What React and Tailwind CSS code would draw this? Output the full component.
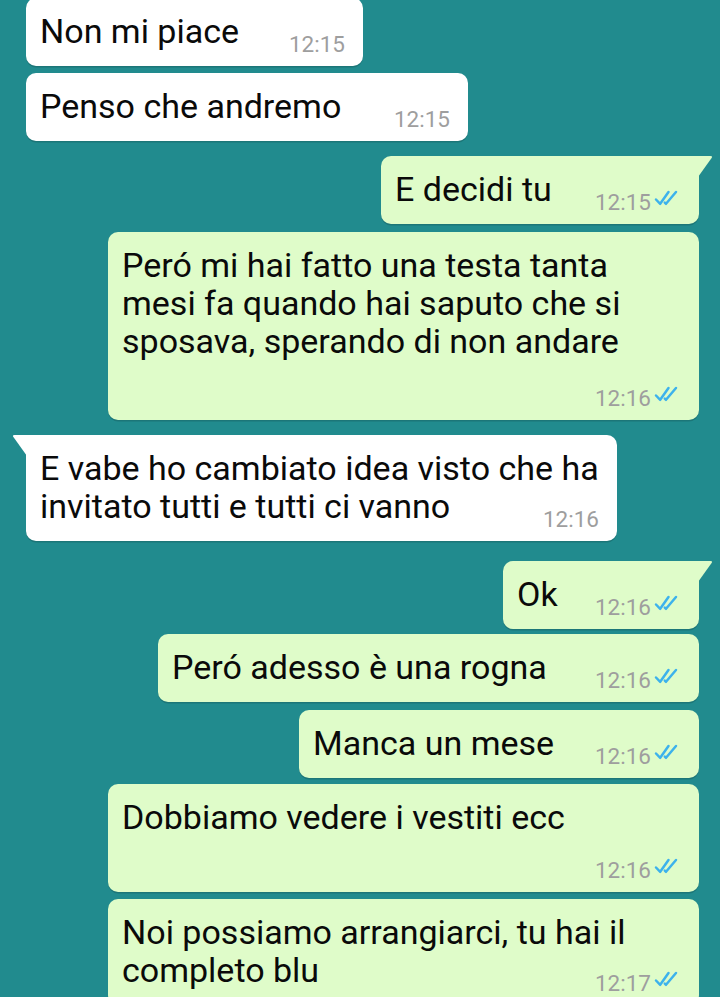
import React from "react";

const Checks = () => (
  <svg width="27" height="17" viewBox="0 0 27 17" className="ml-[3px] mt-[20px] shrink-0" fill="none">
    <path d="M2 9.5 L6.2 13.8 L14.5 2" stroke="#3db2ec" strokeWidth="2.5" strokeLinecap="round" strokeLinejoin="round" />
    <path d="M10.8 12.6 L12 13.8 L22 2" stroke="#3db2ec" strokeWidth="2.5" strokeLinecap="round" strokeLinejoin="round" />
  </svg>
);

const Time = ({ t, out }) => (
  <div className="flex items-start shrink-0">
    <span className="text-[22.5px] leading-[26px] mt-[19px] text-[#9e9e9e]">{t}</span>
    {out && <Checks />}
  </div>
);

const TailRight = () => (
  <svg className="absolute top-0 right-[-14px]" width="15" height="22" viewBox="0 0 15 22">
    <path d="M0 0 L12.5 0 Q15 0 13.6 2 L0 21 Z" fill="#dffcc9" />
  </svg>
);

const TailLeft = () => (
  <svg className="absolute top-0 left-[-14px]" width="15" height="22" viewBox="0 0 15 22">
    <path d="M15 0 L2.5 0 Q0 0 1.4 2 L15 21 Z" fill="#ffffff" />
  </svg>
);

const textCls = "text-[34px] leading-[38px] whitespace-nowrap text-[#0a0a0a]";

function Bubble({ out, w, mt, lines, time, timeRow, timeMt, tail }) {
  const base = out
    ? "self-end mr-[21px] bg-[#dffcc9]"
    : "self-start ml-[26px] bg-white";
  const corners = tail
    ? out
      ? "rounded-[10px] rounded-tr-none"
      : "rounded-[10px] rounded-tl-none"
    : "rounded-[10px]";
  const last = lines[lines.length - 1];
  const first = lines.slice(0, -1);
  return (
    <div
      className={`relative ${base} ${corners} shadow-[0_1.5px_0.5px_rgba(0,0,0,0.15)] pl-[14px] pr-[18px] pt-[14px] pb-[9px] shrink-0`}
      style={{ width: w, marginTop: mt }}
    >
      {tail && (out ? <TailRight /> : <TailLeft />)}
      {timeRow ? (
        <>
          {lines.map((l, i) => (
            <div key={i} className={textCls}>
              {l}
            </div>
          ))}
          <div className="flex justify-end" style={{ marginTop: timeMt - 19 }}>
            <Time t={time} out={out} />
          </div>
        </>
      ) : (
        <>
          {first.map((l, i) => (
            <div key={i} className={textCls}>
              {l}
            </div>
          ))}
          <div className="flex justify-between items-start">
            <span className={textCls}>{last}</span>
            <Time t={time} out={out} />
          </div>
        </>
      )}
    </div>
  );
}

export default function App() {
  return (
    <div
      className="w-[720px] h-[997px] overflow-hidden bg-[#218b8e] flex flex-col"
      style={{ fontFamily: "Roboto, 'Noto Sans', sans-serif" }}
    >
      <Bubble w={337} mt={-2} lines={["Non mi piace"]} time="12:15" />
      <Bubble w={442} mt={7} lines={["Penso che andremo"]} time="12:15" />
      <Bubble out tail w={318} mt={15} lines={["E decidi tu"]} time="12:15" />
      <Bubble
        out
        w={591}
        mt={8}
        lines={[
          "Peró mi hai fatto una testa tanta",
          "mesi fa quando hai saputo che si",
          "sposava, sperando di non andare",
        ]}
        time="12:16"
        timeRow
        timeMt={25}
      />
      <Bubble
        tail
        w={591}
        mt={15}
        lines={["E vabe ho cambiato idea visto che ha", "invitato tutti e tutti ci vanno"]}
        time="12:16"
      />
      <Bubble out tail w={196} mt={20} lines={["Ok"]} time="12:16" />
      <Bubble out w={541} mt={5} lines={["Peró adesso è una rogna"]} time="12:16" />
      <Bubble out w={400} mt={8} lines={["Manca un mese"]} time="12:16" />
      <Bubble
        out
        w={591}
        mt={6}
        lines={["Dobbiamo vedere i vestiti ecc"]}
        time="12:16"
        timeRow
        timeMt={21}
      />
      <Bubble
        out
        w={591}
        mt={7}
        lines={["Noi possiamo arrangiarci, tu hai il", "completo blu"]}
        time="12:17"
      />
    </div>
  );
}
